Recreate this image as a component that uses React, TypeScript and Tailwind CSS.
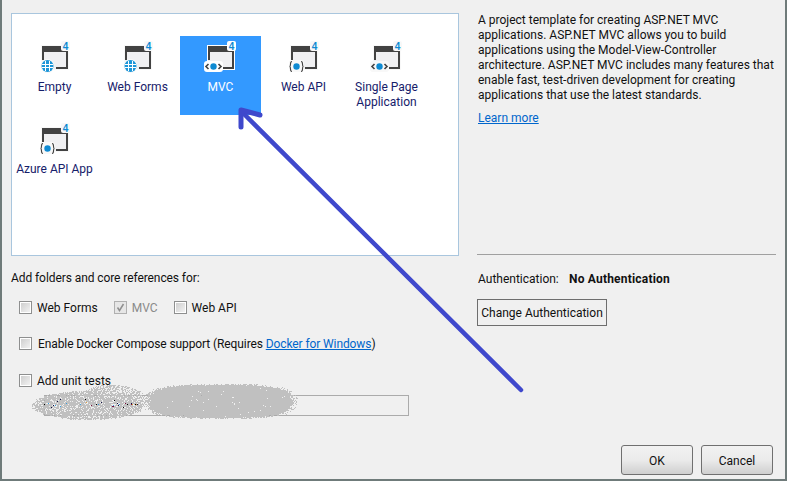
type IconKind = 'globe' | 'mvc' | 'api';

const TEMPLATES: { label: string; icon: IconKind; selected?: boolean }[] = [
  { label: 'Empty', icon: 'globe' },
  { label: 'Web Forms', icon: 'globe' },
  { label: 'MVC', icon: 'mvc', selected: true },
  { label: 'Web API', icon: 'api' },
  { label: 'Single Page Application', icon: 'mvc' },
  { label: 'Azure API App', icon: 'api' },
];

function TemplateIcon({ kind, selected }: { kind: IconKind; selected?: boolean }) {
  const halo = selected ? '#ffffff' : '#f8f8f8';
  return (
    <svg width="36" height="32" viewBox="0 0 36 32" className="block">
      <rect x="4" y="4" width="28" height="25" fill={halo} />
      <rect x="5" y="5" width="26" height="23" fill="#f0f0f2" />
      <path d="M5 5h26v23h-12v-2h10v-15h-24v7h-0z" fill="#424242" />
      <rect x="5" y="5" width="2" height="14" fill="#424242" />
      <rect x="24" y="0" width="9" height="10" rx="2" fill={selected ? '#ffffff' : '#f8f8f8'} />
      <text x="28.5" y="9" textAnchor="middle" fontSize="10" fontWeight="700" fontFamily="Liberation Sans, sans-serif" fill="#0e8ad2">
        4
      </text>
      {kind === 'globe' && (
        <g>
          <circle cx="10.5" cy="25" r="7" fill={halo} />
          <circle cx="10.5" cy="25" r="6" fill="#1b95d8" />
          <path d="M5 23.5h11M5 26.5h11M8.5 20v10M12.5 20v10" stroke="#ffffff" strokeWidth="1" fill="none" />
        </g>
      )}
      {kind === 'mvc' && (
        <g>
          <rect x="1" y="20" width="19" height="11" rx="3" fill={halo} />
          <circle cx="10.5" cy="25.5" r="3.2" fill="#0e8ad2" />
          <path d="M5.5 23l-2.5 2.5l2.5 2.5M15.5 23l2.5 2.5l-2.5 2.5" stroke="#424242" strokeWidth="1.6" fill="none" />
        </g>
      )}
      {kind === 'api' && (
        <g>
          <rect x="3" y="19" width="15" height="12" rx="3" fill={halo} />
          <circle cx="10.5" cy="25.5" r="3.2" fill="#0e8ad2" />
          <path d="M6 20.5c-1.5 0-1.5 1-1.5 2.5s0 2.5-1 2.5c1 0 1 1 1 2.500s0 2.500 1.500 2.500M15 20.500c1.500 0 1.500 1 1.500 2.500s0 2.500 1 2.500c-1 0-1 1-1 2.500s0 2.500-1.500 2.500" stroke="#424242" strokeWidth="1.1" fill="none" />
        </g>
      )}
    </svg>
  );
}

function TemplateTile({ label, icon, selected }: { label: string; icon: IconKind; selected?: boolean }) {
  return (
    <div className={`h-[79px] w-[81px] flex flex-col items-center pt-[5px] ${selected ? 'bg-[#3399ff] text-white' : 'text-[#16206a]'}`}>
      <TemplateIcon kind={icon} selected={selected} />
      <span className="mt-[7px] text-center leading-[15px]">{label}</span>
    </div>
  );
}

function Checkbox({ label, checked, disabled, className }: { label?: string; checked?: boolean; disabled?: boolean; className?: string }) {
  return (
    <div className={`flex items-center h-[15px] ${className ?? ''}`}>
      <span className={`relative w-[13px] h-[13px] border flex-shrink-0 ${disabled ? 'border-[#b0b0b0] bg-[#e6e6e6]' : 'border-[#8e8f8f] bg-white'}`}>
        {!disabled && <span className="block m-[1px] w-[9px] h-[9px] bg-gradient-to-br from-[#cfcfcf] to-[#f2f2f2]" />}
        {checked && (
          <svg width="11" height="11" viewBox="0 0 11 11" className="absolute left-0 top-0">
            <path d="M2.500 5.500l2 3l4-6.500" stroke="#8f8f8f" strokeWidth="1.500" fill="none" />
          </svg>
        )}
      </span>
      {label && <span className={`ml-[5px] pt-[2px] ${disabled ? 'text-[#8a8a8a]' : ''}`}>{label}</span>}
    </div>
  );
}

// speckled smudge that hides the project name
function makeSmudge() {
  let seed = 12345;
  const rnd = () => {
    seed = (seed * 1664525 + 1013904223) % 4294967296;
    return seed / 4294967296;
  };
  const blobs = [
    { cx: 88, cy: 405, rx: 58, ry: 15, max: 0.78, pow: 2 },
    { cx: 112, cy: 397, rx: 32, ry: 13, max: 0.6, pow: 2 },
    { cx: 220, cy: 401, rx: 78, ry: 18, max: 0.99, pow: 3 },
  ];
  let grey = '';
  for (let y = 380; y < 424; y++) {
    for (let x = 28; x < 302; x++) {
      let p = 0;
      for (const b of blobs) {
        const d = Math.pow(Math.pow(Math.abs(x - b.cx) / b.rx, b.pow) + Math.pow(Math.abs(y - b.cy) / b.ry, b.pow), 1 / b.pow);
        p = Math.max(p, Math.min(b.max, (1 - d) * 9));
      }
      if (rnd() < p) grey += `M${x - 28} ${y - 380}h1v1h-1z`;
    }
  }
  const dots: { x: number; y: number; c: string }[] = [];
  const colors = ['#000000', '#7a0a3a', '#3aa0e0', '#e0a040', '#101040'];
  for (let i = 0; i < 34; i++) {
    dots.push({ x: 43 + Math.floor(rnd() * 95), y: 399 + Math.floor(rnd() * 9), c: colors[Math.floor(rnd() * 5)] });
  }
  return { grey, dots };
}

const SMUDGE = makeSmudge();

export default function App() {
  return (
    <div className="relative w-[787px] h-[481px] bg-[#f0f0f0] border-l-2 border-r-2 border-b-2 border-[#6f7b7a] overflow-hidden text-[12px] leading-[15px] text-[#111111] font-['Roboto',sans-serif] flex">
      {/* Left column */}
      <div className="w-[457px] pl-[9px] pt-[13px] flex flex-col flex-shrink-0">
        <div className="w-[448px] h-[243px] border border-[#a9c6de] bg-white pl-[2px] pt-[22px]">
          <div className="grid grid-cols-[repeat(5,81px)] gap-x-[2px] gap-y-[3px]">
            {TEMPLATES.map((t) => (
              <TemplateTile key={t.label} label={t.label} icon={t.icon} selected={t.selected} />
            ))}
          </div>
        </div>

        <div className="mt-[15px] tracking-[-0.08px]">Add folders and core references for:</div>
        <div className="mt-[14px] ml-[8px] flex items-center">
          <Checkbox label="Web Forms" />
          <Checkbox label="MVC" checked disabled className="ml-[16px]" />
          <Checkbox label="Web API" className="ml-[16px]" />
        </div>
        <div className="mt-[20px] ml-[8px] flex items-center">
          <Checkbox />
          <span className="ml-[6px] pt-[2px] tracking-[-0.1px]">
            Enable Docker Compose support (Requires <span className="text-[#0066cc] underline">Docker for Windows</span>)
          </span>
        </div>
        <Checkbox label="Add unit tests" className="mt-[21px] ml-[8px]" />
        <div className="mt-[7px] ml-[33px] w-[365px] h-[21px] border border-[#ababab]" />
      </div>

      {/* Right column */}
      <div className="flex-1 pl-[19px] pr-[9px] pt-[13px] flex flex-col">
        <p className="w-[296px]">
          A project template for creating ASP.NET MVC applications. ASP.NET MVC allows you to build applications using the Model-View-Controller architecture. ASP.NET MVC includes many features that enable fast, test-driven development for creating applications that use the latest standards.
        </p>
        <a className="mt-[8px] text-[#0066cc] underline">Learn more</a>
        <div className="mt-[128px] -ml-px h-px bg-[#a0a0a0]" />
        <div className="mt-[17px] flex">
          <span className="w-[91px]">Authentication:</span>
          <span className="font-bold tracking-[0.2px]">No Authentication</span>
        </div>
        <button className="mt-[12px] -ml-px w-[130px] h-[27px] pt-[2px] border border-[#6e6e6e] whitespace-nowrap">Change Authentication</button>
        <div className="mt-auto mb-[4px] flex justify-end gap-[8px] pr-[3px]">
          <button className="w-[72px] h-[30px] pt-[2px] rounded-[3px] border border-[#707070] bg-gradient-to-b from-[#f2f2f2] via-[#ebebeb] to-[#cfcfcf]">OK</button>
          <button className="w-[72px] h-[30px] pt-[2px] rounded-[3px] border border-[#707070] bg-gradient-to-b from-[#f2f2f2] via-[#ebebeb] to-[#cfcfcf]">Cancel</button>
        </div>
      </div>

      {/* Smudge over the project name */}
      <svg width="274" height="44" className="absolute left-[26px] top-[380px]">
        <path d={SMUDGE.grey} fill="#c0c0c0" />
        {SMUDGE.dots.map((d, i) => (
          <rect key={i} x={d.x - 28} y={d.y - 380} width="1" height="1" fill={d.c} />
        ))}
      </svg>

      {/* Annotation arrow */}
      <svg width="787" height="481" className="absolute -left-[2px] top-0 pointer-events-none">
        <path d="M242 112L521 390" stroke="#3f48cc" strokeWidth="4.500" strokeLinecap="round" fill="none" />
        <path d="M241 127V110L260 115" stroke="#3f48cc" strokeWidth="5" strokeLinecap="round" strokeLinejoin="round" fill="none" />
      </svg>
    </div>
  );
}
